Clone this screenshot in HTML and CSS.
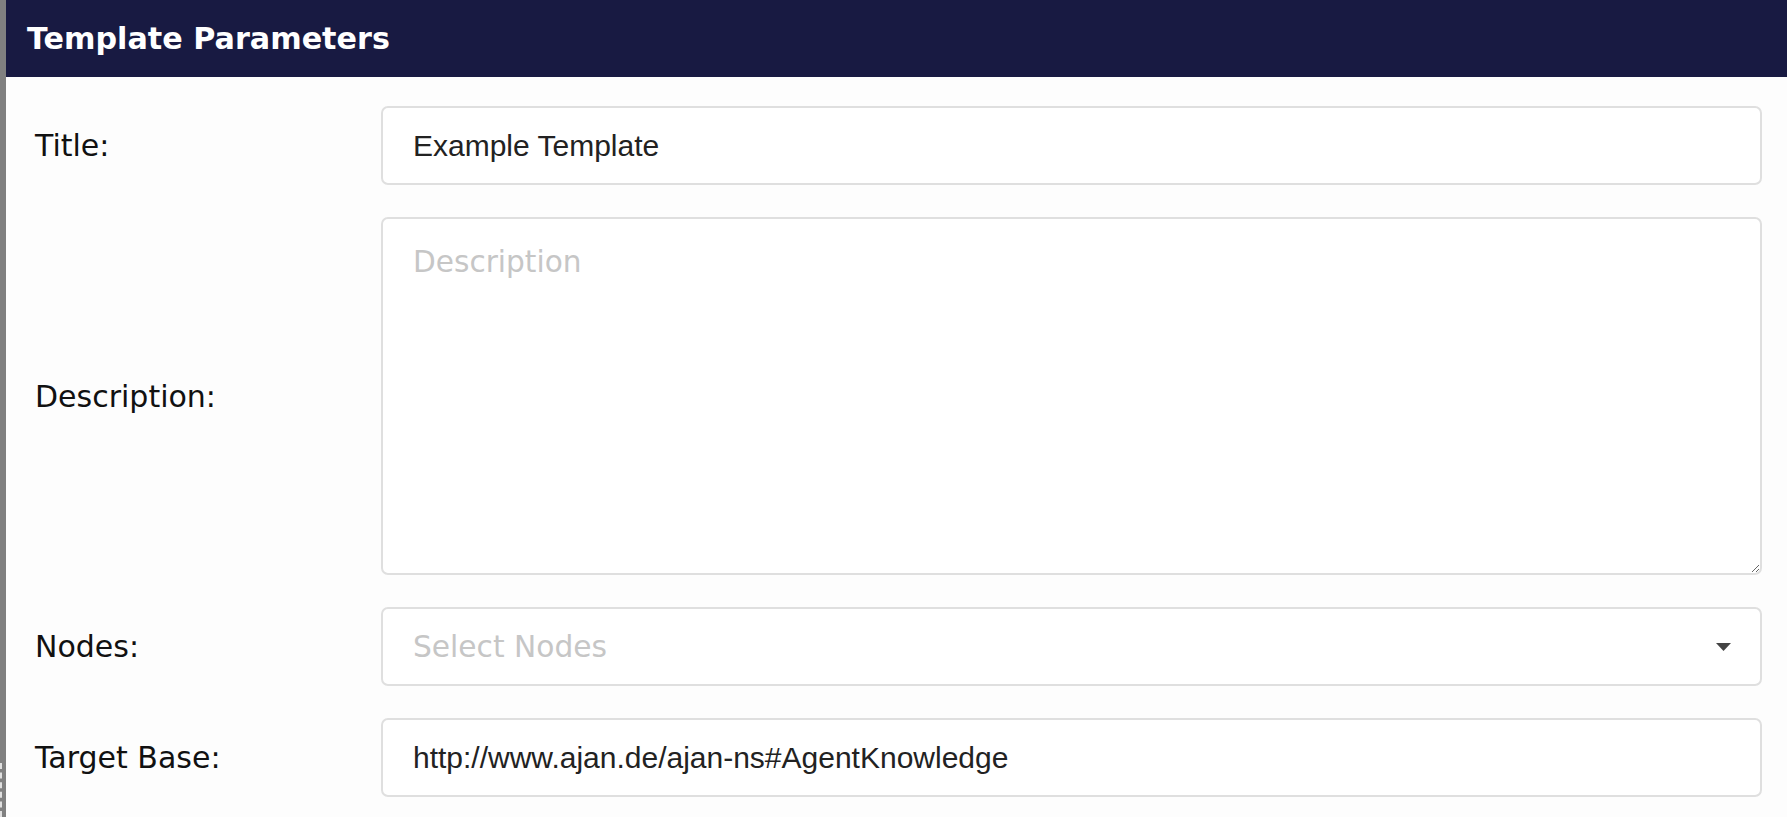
FILE: index.html
```html
<!DOCTYPE html>
<html lang="en">
<head>
<meta charset="utf-8">
<title>Template Parameters</title>
<link rel="stylesheet" href="styles.css">
</head>
<body>
<div class="app">
  <div class="strip"><div class="strip-fill"></div><div class="strip-grip"></div></div>
  <div class="panel">
    <div class="panel-header">Template Parameters</div>
    <form class="form">
      <div class="row">
        <label class="label" for="title">Title:</label>
        <input class="field field-input" id="title" type="text" value="Example Template">
      </div>
      <div class="row">
        <label class="label" for="desc">Description:</label>
        <textarea class="field field-area" id="desc" placeholder="Description"></textarea>
      </div>
      <div class="row">
        <label class="label">Nodes:</label>
        <div class="field field-select">
          <span class="select-placeholder">Select Nodes</span>
          <svg class="caret" width="15" height="8" viewBox="0 0 15 8"><path d="M0 0H15L7.5 8Z" fill="#444"/></svg>
        </div>
      </div>
      <div class="row">
        <label class="label" for="base">Target Base:</label>
        <input class="field field-input" id="base" type="text" value="http://www.ajan.de/ajan-ns#AgentKnowledge">
      </div>
    </form>
  </div>
</div>
</body>
</html>
```
FILE: styles.css
```css
html, body {
  margin: 0;
  padding: 0;
  height: 100%;
}
body {
  background: #fdfdfd;
  font-family: "DejaVu Sans", Verdana, sans-serif;
  overflow: hidden;
}
.app {
  display: flex;
  height: 817px;
}
.strip {
  width: 6px;
  flex: 0 0 6px;
  background: #808080;
  display: flex;
  flex-direction: column;
}
.strip-fill {
  flex: 1;
}
.strip-grip {
  height: 54px;
  width: 0;
  border-left: 2px dashed rgba(255, 255, 255, 0.75);
}
.panel {
  flex: 1;
  min-width: 0;
}
.panel-header {
  height: 77px;
  box-sizing: border-box;
  background: #181a42;
  color: #ffffff;
  font-weight: bold;
  font-size: 30.2px;
  padding-left: 21px;
  display: flex;
  align-items: center;
}
.form {
  padding: 29px 25px 0 29px;
  display: flex;
  flex-direction: column;
  gap: 32px;
}
.row {
  display: grid;
  grid-template-columns: 346px 1fr;
  align-items: center;
}
.label {
  font-size: 30px;
  color: #111;
}
.field {
  box-sizing: border-box;
  width: 100%;
  height: 79px;
  margin: 0;
  border: 2px solid #dfdfdf;
  border-radius: 7px;
  background: #ffffff;
  padding: 0 30px;
  outline: none;
}
.field-input {
  font-family: "Liberation Sans", Arial, sans-serif;
  font-size: 30px;
  color: #222;
}
.field-area {
  height: 358px;
  padding: 23px 30px;
  font-family: "DejaVu Sans", Verdana, sans-serif;
  font-size: 29.6px;
  line-height: 1.4;
  color: #222;
  resize: both;
  display: block;
}
.field-area::placeholder {
  color: #c6c6c6;
}
.field-select {
  display: flex;
  align-items: center;
  justify-content: space-between;
  padding-right: 29px;
}
.select-placeholder {
  font-size: 29.7px;
  color: #c6c6c6;
}
.caret {
  display: block;
}
```
